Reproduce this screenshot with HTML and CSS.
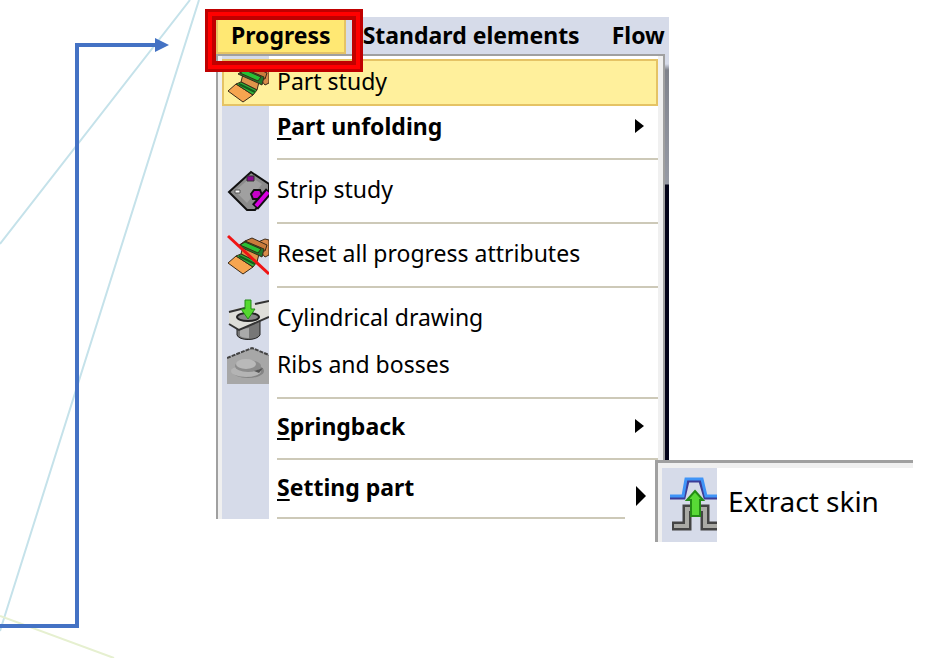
FILE: index.html
```
<!DOCTYPE html>
<html lang="en">

<head>
  <meta charset="UTF-8">
  <meta name="viewport" content="width=device-width, initial-scale=1.0">
  <title>Progress menu</title>
  <link rel="stylesheet" href="styles.css">
</head>

<body>

  <!-- Slide decoration and the connector arrow -->
  <svg class="lines" width="220" height="658" viewBox="0 0 220 658" fill="none" aria-hidden="true">
    <path d="M190 0L0 244M199 0L0 631" stroke="#c5e2ea" stroke-width="2"/>
    <path d="M0 616L114 658" stroke="#e6f0d0" stroke-width="2"/>
    <path d="M0 626H77V45H157" stroke="#4472c4" stroke-width="4"/>
    <path d="M155 38L169 45L155 52Z" fill="#4472c4"/>
  </svg>

  <main class="slide">
    <div class="window">
      <nav class="menubar">
        <button class="menubar-item active">Progress</button>
        <button class="menubar-item">Standard elements</button>
        <button class="menubar-item">Flow</button>
        <span class="highlight-box"></span>
      </nav>

      <div class="dropdown-area">
        <div class="dropdown">
          <button class="item selected">
            <svg class="icon" viewBox="0 0 42 42">
              <use href="#part"/>
            </svg>
            <span class="label">Part study</span>
          </button>
          <button class="item group">
            <span class="label"><u>P</u>art unfolding</span>
            <svg class="arrow" viewBox="0 0 9 14"><path d="M0 0L9 7L0 14Z"/></svg>
          </button>
          <hr class="separator">
          <button class="item">
            <svg class="icon" viewBox="0 0 42 42">
              <path d="M2 22L24 2L42 14V23L28 40H20Z" fill="#8b8b8b" stroke="#111" stroke-width="2"/>
              <path d="M8 21L24 7L35 14L20 33Z" fill="#a0a0a0"/>
              <path d="M20 6h7v5h-7z" fill="#8d0894" stroke="#333"/>
              <path d="M8 20h5v3h-5z" fill="#fff" stroke="#555"/>
              <path d="M24 24l3-4h6l2 5-4 4h-5z" fill="#c800c8" stroke="#111" stroke-width="2"/>
              <path d="M28 37L42 21" stroke="#111" stroke-width="8"/>
              <path d="M29 36L41 22" stroke="#d800e0" stroke-width="4"/>
            </svg>
            <span class="label">Strip study</span>
          </button>
          <hr class="separator">
          <button class="item">
            <svg class="icon" viewBox="0 0 42 42">
              <use href="#part"/>
              <path d="M1 2L42 40" stroke="#f01414" stroke-width="3"/>
            </svg>
            <span class="label">Reset all progress attributes</span>
          </button>
          <hr class="separator">
          <button class="item">
            <svg class="icon" viewBox="0 0 42 42">
              <path d="M10 26V37C12 43 30 43 33 37V22Z" fill="#777" stroke="#222"/>
              <path d="M13 31V38C16 40 20 40 22 40V30Z" fill="#aaa"/>
              <path d="M2 13L28 5L42 2V18L12 32L2 26Z" fill="#deded9"/>
              <path d="M2 14L18 10M28 6L42 3M2 26L12 32L42 19" fill="none" stroke="#333" stroke-width="2"/>
              <ellipse cx="21" cy="19" rx="11" ry="4" fill="#888" stroke="#222" stroke-width="2"/>
              <path d="M18 2H24V11H28L21 21L14 11H18Z" fill="#55d92f" stroke="#238b17"/>
            </svg>
            <span class="label">Cylindrical drawing</span>
          </button>
          <button class="item">
            <svg class="icon" viewBox="0 0 42 42">
              <path d="M0 13L25 3L42 10V39H0Z" fill="#a7a7a7"/>
              <path d="M0 13L25 3L42 10" fill="none" stroke="#444" stroke-width="2" stroke-dasharray="4 1"/>
              <ellipse cx="21" cy="26" rx="16" ry="7" fill="#848484"/>
              <ellipse cx="19" cy="26" rx="15" ry="6" fill="#b4b4b4"/>
              <ellipse cx="21" cy="21" rx="13" ry="6" fill="#8c8c8c"/>
              <ellipse cx="19" cy="19" rx="10" ry="5" fill="#b9b9b9"/>
              <path d="M27 26L36 23L32 28Z" fill="#555"/>
            </svg>
            <span class="label">Ribs and bosses</span>
          </button>
          <hr class="separator">
          <button class="item group">
            <span class="label"><u>S</u>pringback</span>
            <svg class="arrow" viewBox="0 0 9 14"><path d="M0 0L9 7L0 14Z"/></svg>
          </button>
          <hr class="separator">
          <button class="item group">
            <span class="label"><u>S</u>etting part</span>
            <svg class="arrow large" viewBox="0 0 10 20"><path d="M0 0L10 10L0 20Z"/></svg>
          </button>
          <hr class="separator last">
        </div>
        <div class="backdrop"></div>

        <div class="submenu">
          <button class="submenu-item">
            <svg class="submenu-icon" viewBox="0 0 55 74" fill="none">
              <path d="M8 30H22L26 13H38L43 30H55" stroke="#3c3c96" stroke-width="3"/>
              <path d="M8 28H21L24 11H40L44 28H55" stroke="#3f94f7" stroke-width="3"/>
              <path d="M10 58H25V41H32M55 58H43V41H35" stroke="#444" stroke-width="9"/>
              <path d="M12 58H25V41H32M55 58H43V41H35" stroke="#aaaaa5" stroke-width="4"/>
              <path d="M33 23L41 32H38V48H29V32H25Z" fill="#58d936" stroke="#248c16" stroke-width="2"/>
            </svg>
            <span class="submenu-label">Extract skin</span>
          </button>
        </div>
      </div>
    </div>
  </main>

  <!-- Bent part icon, used by two items -->
  <svg class="symbols" width="0" height="0" aria-hidden="true">
    <symbol id="part" viewBox="0 0 42 42">
      <g stroke="#3a2a18" stroke-linejoin="round">
        <path d="M31 8L38 5L42 6V21L38 23L33 17Z" fill="#d98a4a"/>
        <path d="M18 7L25 4L40 11L38 17L33 16Z" fill="#c97c3c"/>
        <path d="M14 20L16 12L32 20L30 28Z" fill="#e0944a"/>
        <path d="M11 12L18 7L37 15L35 23L31 21Z" fill="#1f7a2c"/>
        <path d="M13 11L18 8L34 15L31 19Z" fill="#28c034"/>
        <path d="M1 29L9 22L26 33L16 40Z" fill="#f6a550"/>
        <path d="M9 22L14 20L30 28L26 33Z" fill="#2fb43c"/>
        <path d="M12 22L28 30" stroke="#145c1c" stroke-width="2"/>
      </g>
    </symbol>
  </svg>

</body>

</html>
```
FILE: styles.css
```
* {
  box-sizing: border-box;
}

body {
  margin: 0;
  background-color: #fff;
  font-family: "Noto Sans", "Open Sans", sans-serif;
  color: #000;
  position: relative;
  min-height: 100vh;
}

button {
  border: none;
  background: none;
  padding: 0;
  font: inherit;
  color: inherit;
  cursor: pointer;
}

/* Connector lines behind the menu */
.lines {
  position: absolute;
  left: 0;
  top: 0;
}

.symbols {
  position: absolute;
}

.slide {
  display: grid;
  grid-template-columns: 216px minmax(0, 453fr) minmax(0, 281fr);
  padding-top: 17px;
}

.window {
  grid-column: 2;
  position: relative;
}

/* Menu bar */
.menubar {
  position: relative;
  display: flex;
  gap: 2px;
  height: 37px;
  background-color: #d6dbe9;
  font-size: 23px;
  font-weight: bold;
  white-space: nowrap;
}

.menubar-item {
  flex-shrink: 0;
  padding: 0 15px 2px;
}

.menubar-item.active {
  background-color: #ffe873;
  border: 2px solid #e5c365;
  padding: 0 13px 2px;
}

.highlight-box {
  position: absolute;
  z-index: 2;
  left: -11px;
  top: -8px;
  width: 158px;
  height: 63px;
  border: 3px solid #c00000;
  box-shadow: inset 0 0 0 4px #ff0000, inset 0 0 0 8px #c00000;
}

/* Dropdown */
.dropdown-area {
  position: relative;
  display: flex;
  background-color: #d6dbe9;
}

.dropdown {
  flex: 1;
  border: 2px solid #a0a0a0;
  border-bottom: none;
  padding: 3px 5px 0 4px;
  background: linear-gradient(to right, #f0f0f0 4px, #d6dbe9 4px, #d6dbe9 51px, #fff 51px, #fff calc(100% - 5px), #f0f0f0 calc(100% - 5px));
}

.item {
  display: flex;
  align-items: center;
  width: 100%;
  height: 47px;
  padding-left: 55px;
  font-size: 23px;
  text-align: left;
  white-space: nowrap;
}

.item:has(.icon) {
  padding-left: 5px;
}

.item.selected {
  background-color: #fff09c;
  border: 2px solid #e5c365;
  padding-left: 3px;
}

.item.group {
  height: 44px;
  font-weight: bold;
}

.icon {
  width: 42px;
  height: 42px;
  margin-right: 8px;
}

.label {
  flex: 1;
  padding-bottom: 4px;
}

.label u {
  text-underline-offset: 3px;
}

.arrow {
  width: 9px;
  height: 14px;
  margin: 0 14px 4px 0;
}

.arrow.large {
  width: 10px;
  height: 20px;
  margin: 0 12px 5px 0;
  align-self: flex-end;
}

.separator {
  height: 2px;
  margin: 8px 0 7px 55px;
  border: none;
  background-color: #cdc9b8;
}

.separator.last {
  margin: 6px 33px 0 55px;
}

.backdrop {
  width: 4px;
  background: linear-gradient(to bottom, #d6dbe9 10px, #80838c 16px, #969aa5 130px, #04041a 131px, #04041a 406px, #fff 406px);
}

/* Submenu opened over the dropdown */
.submenu {
  position: absolute;
  left: calc(100% - 14px);
  top: 406px;
  width: 258px;
  border: 3px solid #a0a0a0;
  border-right: none;
  border-bottom: none;
  padding: 5px 0 0 4px;
  background-color: #f0f0f0;
}

.submenu-item {
  display: flex;
  align-items: center;
  width: 100%;
  height: 74px;
  background-color: #fff;
  font-size: 28px;
  white-space: nowrap;
}

.submenu-icon {
  width: 55px;
  height: 74px;
  margin-right: 11px;
  background-color: #d6dbe9;
}

.submenu-label {
  padding-bottom: 8px;
}
```
